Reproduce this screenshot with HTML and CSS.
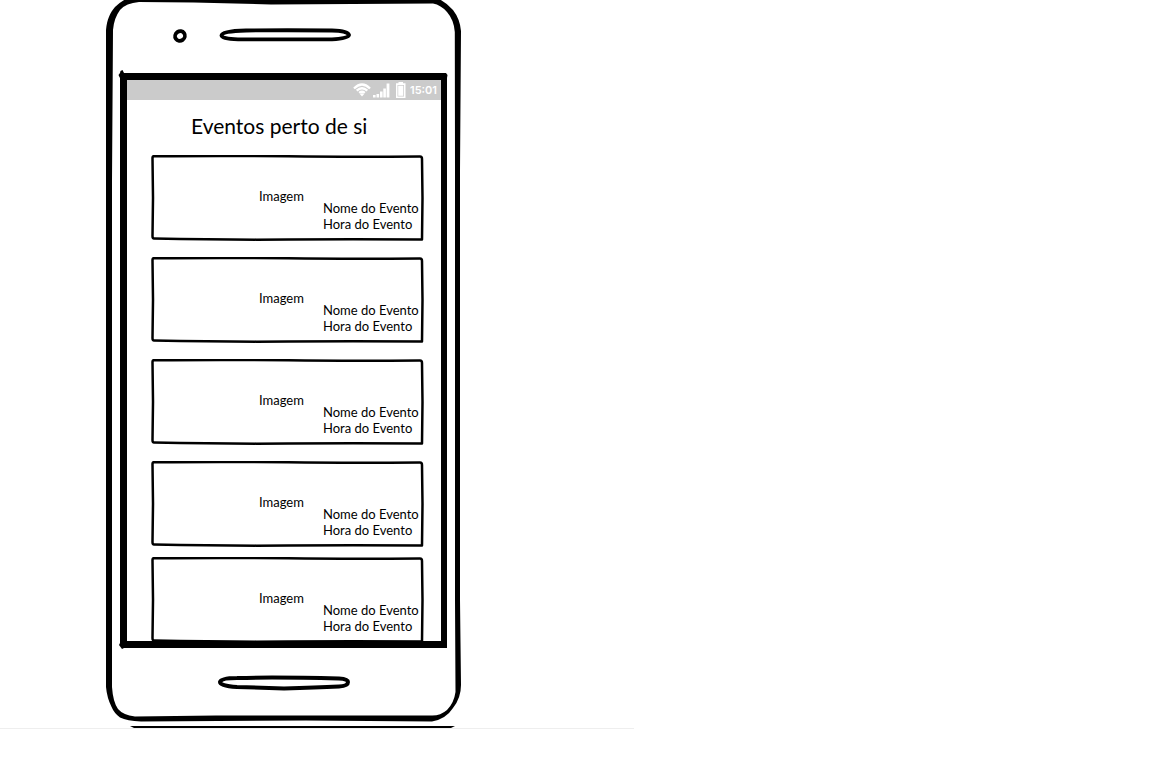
FILE: index.html
```
<!DOCTYPE html>
<html lang="pt">
<head>
<meta charset="utf-8">
<meta name="viewport" content="width=device-width, initial-scale=1">
<title>Eventos perto de si</title>
<link rel="stylesheet" href="styles.css">
</head>
<body>
<svg class="defs" aria-hidden="true">
  <symbol id="card-frame" viewBox="0 0 274 87">
    <path d="M3 1.200Q80 .6 137 1.300T269 1.500Q271 1.500 271 4L271.500 43 271 84.500Q200 84 137 84.500T3 83.500Q1.500 83.500 1.500 81L2 43 1.500 3Q1.500 1.200 3 1.200Z" fill="none" stroke="#000" stroke-width="2.500" stroke-linejoin="round"/>
  </symbol>
</svg>
<main class="sheet">
  <section class="phone">
    <svg class="phone-frame" viewBox="0 0 356 728" aria-hidden="true">
      <path fill-rule="evenodd" d="M0 30C1 19 4 13 9 7Q14 2 20-1H333Q341 3 347 10Q354 19 355 31L354 170V600L355 685Q355 698 347 708Q340 719 326 721.500L200 720.500 35 721.500Q21 721 14 717.500Q8 713 5.600 707Q1 698 0 687ZM7 30L6 180V600L6 687Q7 702 12 709Q17 715 29 716.500L110 715.500H325Q334 716 341 710Q348 703 349.500 692L349 600V170L348.800 32Q348 20 341 12Q335 5 327 3.500L165 4.500Q90 2 33 2Q20 3 14 10Q8 18 7 30Z"/>
      <ellipse cx="74" cy="36" rx="5" ry="4.700" fill="none" stroke="#000" stroke-width="3.800" transform="rotate(-35 74 36)"/>
      <path d="M140 30.500Q180 30 226 30.500Q242 31 243 35Q242 38.500 226 39.300H132Q116 39 115.500 35.500Q116 31 140 30.500Z" fill="none" stroke="#000" stroke-width="3.800"/>
      <path d="M131 678Q170 677 233 678.500Q242 679 242 682Q242 686 233 686.500Q210 687.500 178 688.500L131 687Q114 686 114 682Q115 678 131 678Z" fill="none" stroke="#000" stroke-width="4"/>
      <path fill-rule="evenodd" d="M14 73L14.500 71 16.500 70 18 73H340L341.500 75 341 78V648H18L16 649 13 645 14 643V78L12.500 75ZM21 80V641H335V80Z"/>
      <path d="M24 726H349L345 728H28Z"/>
    </svg>
    <div class="screen">
      <header class="status">
        <svg class="signals" viewBox="0 0 54 18" fill="#fff" aria-hidden="true">
          <g fill="none" stroke="#fff" stroke-width="2.300">
            <path d="M1 7.500Q9 -.5 17 7.500M3.700 9.700Q9 4.700 14.300 9.700M6.200 11.900Q9 9.700 11.800 11.900"/>
          </g>
          <path d="M9 15.500L6.800 13Q9 11.500 11.200 13Z"/>
          <path d="M20 14h2.600v2.500h-2.600zM23.500 13h2.600V16.500h-2.600zM27 10.500h2.600v6h-2.600zM30.300 7.500h2.600v9h-2.600zM33.600 2.500h2.800V16.500h-2.800z"/>
          <path fill-rule="evenodd" d="M45.500 1h4.500V2.200h2.500v14.800h-9.500V2.200H45.500zM44.500 4V15.500h6.500V4z"/>
          <path d="M45.200 4.700h5.100V14.800h-5.100z"/>
        </svg>
        <time class="clock">15:01</time>
      </header>
      <h1 class="title">Eventos perto de si</h1>
      <ul class="events">
        <li class="card"><svg class="card-frame" aria-hidden="true"><use href="#card-frame"/></svg><p class="image">Imagem</p><p class="info">Nome do Evento<br>Hora do Evento</p></li>
        <li class="card"><svg class="card-frame" aria-hidden="true"><use href="#card-frame"/></svg><p class="image">Imagem</p><p class="info">Nome do Evento<br>Hora do Evento</p></li>
        <li class="card"><svg class="card-frame" aria-hidden="true"><use href="#card-frame"/></svg><p class="image">Imagem</p><p class="info">Nome do Evento<br>Hora do Evento</p></li>
        <li class="card"><svg class="card-frame" aria-hidden="true"><use href="#card-frame"/></svg><p class="image">Imagem</p><p class="info">Nome do Evento<br>Hora do Evento</p></li>
        <li class="card card-last"><svg class="card-frame" aria-hidden="true"><use href="#card-frame"/></svg><p class="image">Imagem</p><p class="info">Nome do Evento<br>Hora do Evento</p></li>
      </ul>
    </div>
  </section>
</main>
</body>
</html>
```
FILE: styles.css
```
* { box-sizing: border-box; }
body {
  margin: 0;
  background: #fff;
  color: #000;
  font-family: Lato, "Liberation Sans", sans-serif;
  font-size: 13px;
  line-height: 16px;
}
h1, p, ul { margin: 0; padding: 0; }
.defs { position: absolute; width: 0; height: 0; }
.sheet {
  width: 55%;
  min-width: 480px;
  padding-left: 106px;
  border-bottom: 1px solid #eee;
}
.phone {
  position: relative;
  width: 356px;
  padding: 80px 21px 85px;
}
.phone-frame {
  position: absolute;
  top: 0;
  left: 0;
  width: 100%;
  pointer-events: none;
}
.status {
  display: flex;
  align-items: center;
  justify-content: flex-end;
  gap: 3px;
  height: 20px;
  padding-right: 4px;
  background: #cbcbcb;
  color: #fff;
}
.signals { width: 54px; height: 18px; }
.clock { font-family: Inter, sans-serif; font-size: 11px; font-weight: 600; }
.title {
  padding: 13px 0 17px 64px;
  font-size: 21px;
  font-weight: 400;
  line-height: 25px;
}
.screen { width: 314px; }
.events {
  display: flex;
  flex-direction: column;
  gap: 16px;
  padding: 0 16px 0 24px;
  list-style: none;
}
.card {
  position: relative;
  height: 86px;
  padding: 33px 0 0 108px;
}
.card + .card-last { margin-top: -6px; }
.card-frame {
  position: absolute;
  top: 0;
  left: 0;
  width: 274px;
  height: 87px;
}
.image { margin-bottom: -4px; }
.info { padding-left: 64px; white-space: nowrap; }
```
